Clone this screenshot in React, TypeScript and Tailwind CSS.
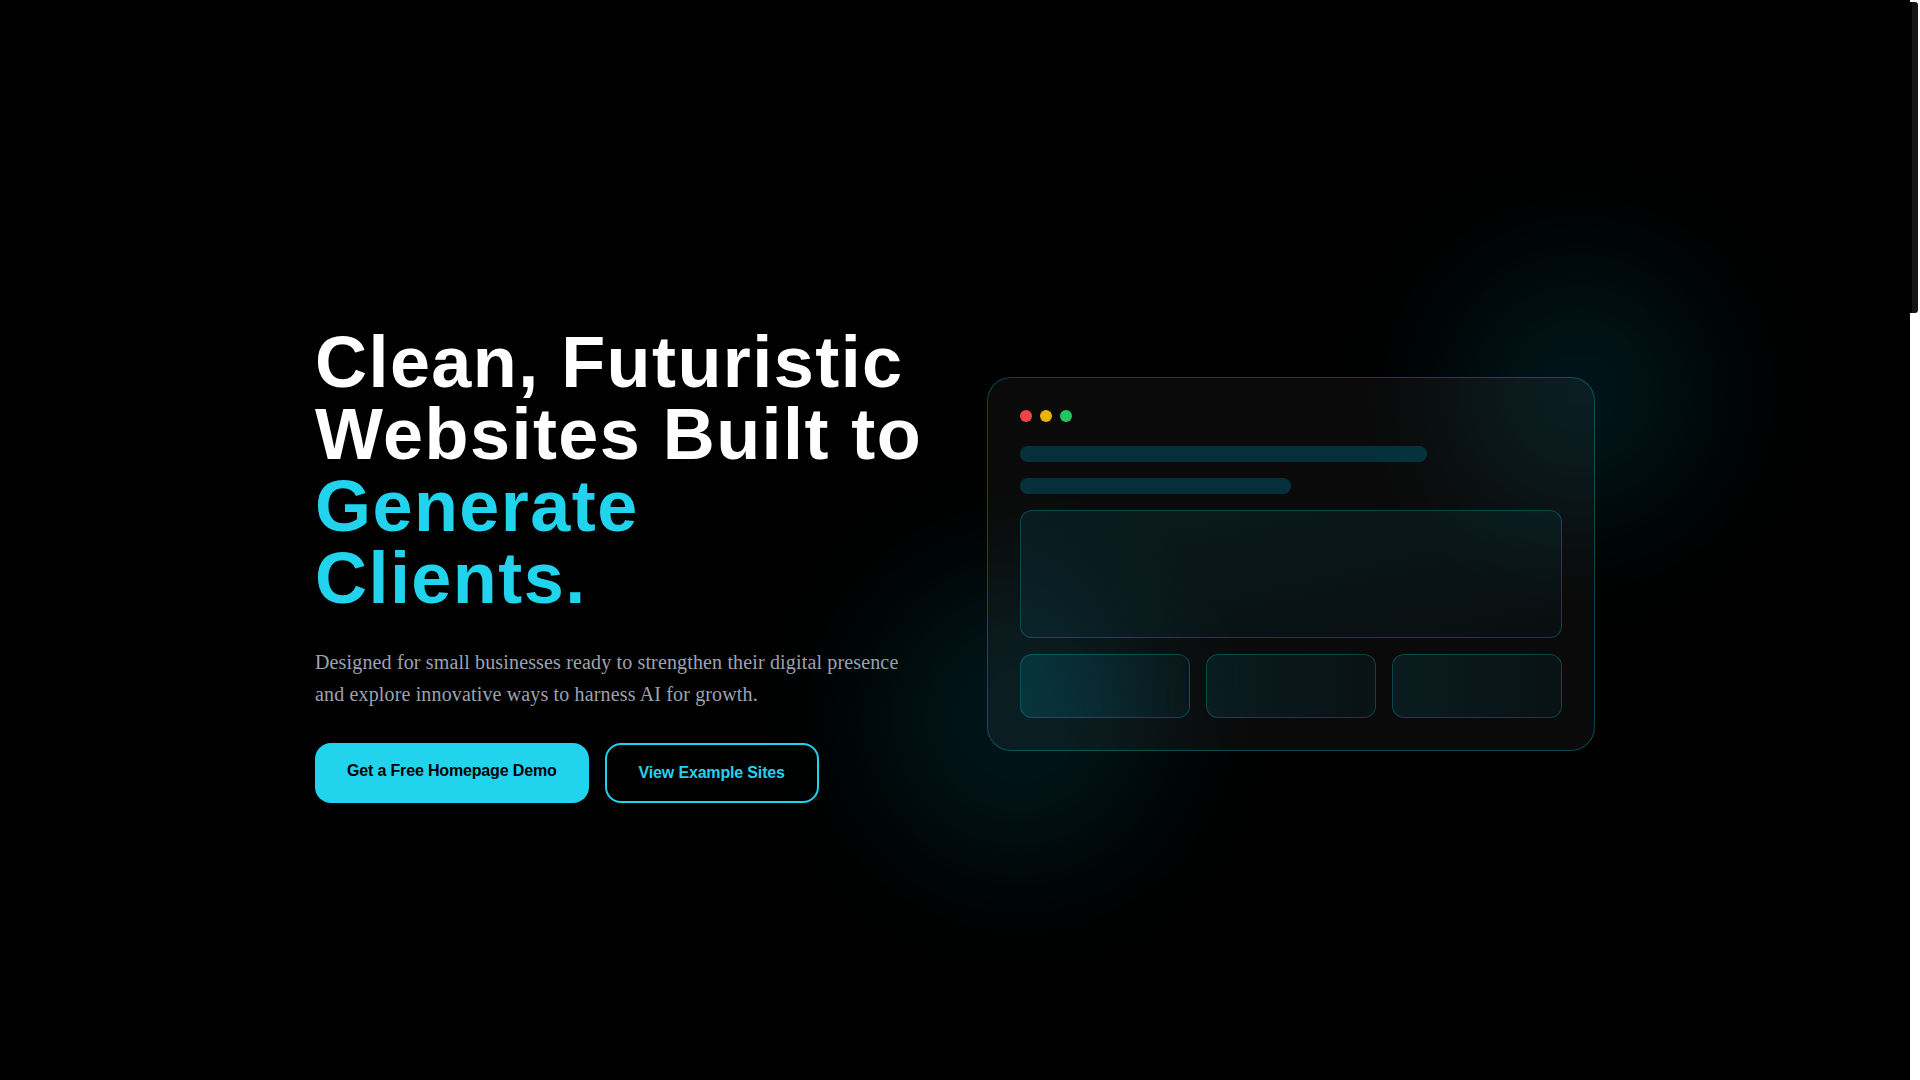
import React from 'react';

const BrowserMockup: React.FC = () => (
  <div className="relative">
    {/* Soft cyan glows behind the mockup */}
    <div className="absolute -top-28 -right-28 w-64 h-64 rounded-full bg-cyan-500/[0.12] blur-3xl pointer-events-none"></div>
    <div className="absolute -bottom-28 -left-28 w-72 h-72 rounded-full bg-cyan-500/[0.12] blur-3xl pointer-events-none"></div>

    <div className="relative rounded-3xl border border-cyan-400/30 bg-white/[0.04] p-8">
      <div className="flex gap-2 mb-6">
        <span className="w-3 h-3 rounded-full bg-[#ef4444]"></span>
        <span className="w-3 h-3 rounded-full bg-[#eab308]"></span>
        <span className="w-3 h-3 rounded-full bg-[#22c55e]"></span>
      </div>

      <div className="space-y-4">
        <div className="h-4 w-3/4 rounded-full bg-cyan-800/45"></div>
        <div className="h-4 w-1/2 rounded-full bg-cyan-800/45"></div>
        <div className="h-32 rounded-xl border border-cyan-400/25 bg-linear-to-br from-cyan-500/10 to-cyan-500/[0.03]"></div>
        <div className="grid grid-cols-3 gap-4">
          <div className="h-16 rounded-xl border border-cyan-400/25 bg-linear-to-r from-cyan-500/15 to-cyan-500/5"></div>
          <div className="h-16 rounded-xl border border-cyan-400/25 bg-linear-to-r from-cyan-500/10 to-cyan-500/5"></div>
          <div className="h-16 rounded-xl border border-cyan-400/25 bg-linear-to-r from-cyan-500/10 to-cyan-500/5"></div>
        </div>
      </div>
    </div>
  </div>
);

// Thin page scrollbar as seen in the capture
const ScrollRail: React.FC = () => (
  <div className="fixed top-0 right-0 h-screen w-[10px] bg-white z-50 pointer-events-none">
    <div className="mt-[2px] h-[311px] w-[8px] border-l-2 border-black bg-[#151515] rounded-r-[3px]"></div>
  </div>
);

export default function App() {
  return (
    <div className="bg-black text-white pr-[10px] font-['Liberation_Sans',Arial,sans-serif]">
      <ScrollRail />

      {/* Hero */}
      <section className="relative min-h-screen flex items-center pt-12 overflow-hidden">
        <div className="mx-auto w-full max-w-7xl grid grid-cols-2 gap-16 items-center">
          <div>
            <h1 className="text-7xl font-bold leading-none tracking-[0.02em] text-white">
              Clean, Futuristic
              <br />
              Websites Built to
              <br />
              <span className="text-[#22d3ee]">
                Generate
                <br />
                Clients.
              </span>
            </h1>

            <p className="mt-8 max-w-[600px] text-xl leading-relaxed tracking-[0.15px] text-[#9ca3af] font-['Liberation_Serif','Times_New_Roman',serif]">
              Designed for small businesses ready to strengthen their digital presence and explore innovative ways to harness AI for growth.
            </p>

            <div className="mt-8 flex gap-4">
              <a href="#demo" className="px-8 py-4 rounded-2xl bg-[#22d3ee] text-black text-base font-bold tracking-[-0.01em] leading-6">
                Get a Free Homepage Demo
              </a>
              <a href="#examples" className="px-8 py-4 rounded-2xl border-2 border-[#22d3ee] bg-transparent text-[#22d3ee] text-base font-bold tracking-[-0.01em] leading-6">
                View Example Sites
              </a>
            </div>
          </div>

          <BrowserMockup />
        </div>
      </section>

      {/* Rest of the page continues below the fold */}
      <div className="h-[2670px]"></div>
    </div>
  );
}
